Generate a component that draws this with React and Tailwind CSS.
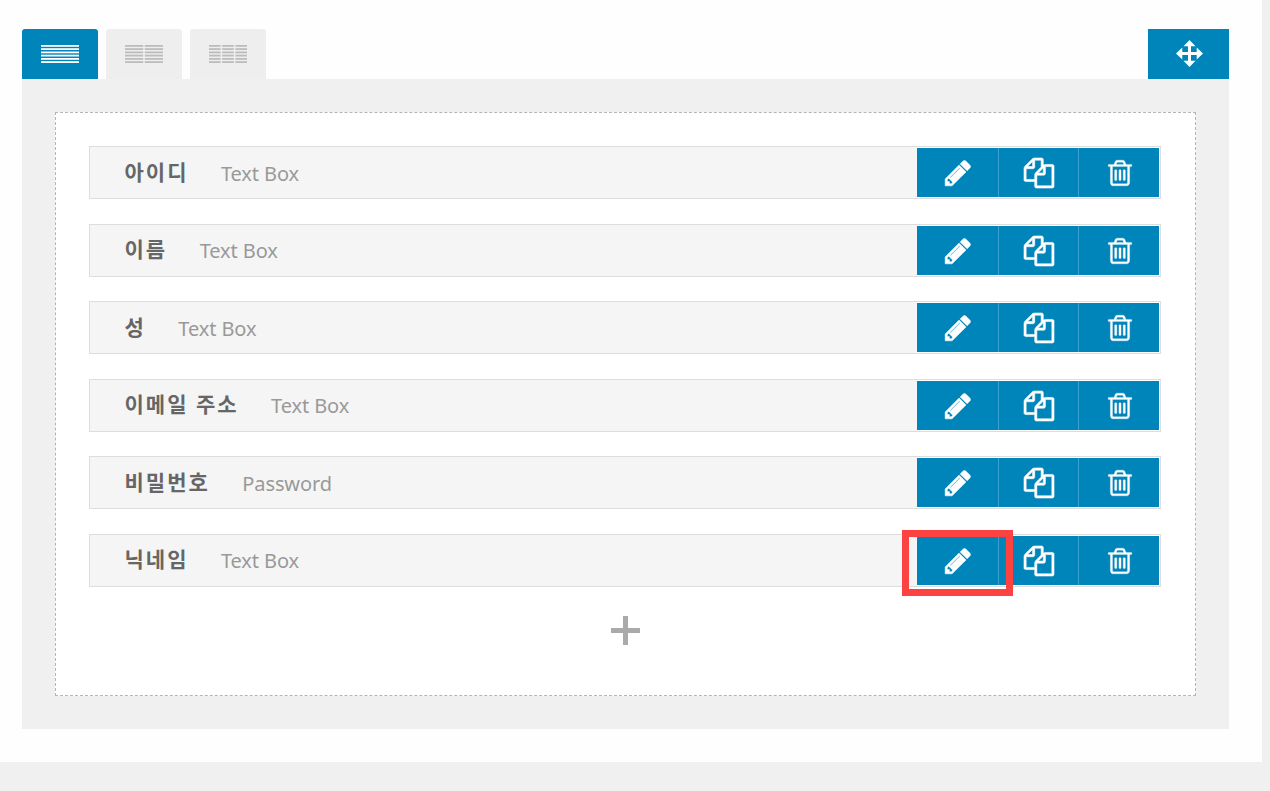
import React, { useState } from 'react';

const fields = [
    { id: 1, label: '아이디', type: 'Text Box' },
    { id: 2, label: '이름', type: 'Text Box' },
    { id: 3, label: '성', type: 'Text Box' },
    { id: 4, label: '이메일 주소', type: 'Text Box' },
    { id: 5, label: '비밀번호', type: 'Password' },
    { id: 6, label: '닉네임', type: 'Text Box', highlighted: true },
];

const Icon = ({ d, weight = 0, className }) => (
    <svg viewBox="0 0 1792 1792" fill="currentColor" stroke="currentColor" strokeWidth={weight} className={`overflow-visible ${className}`}>
        <path d={d} />
    </svg>
);

const PENCIL = 'M491 1536l91-91-235-235-91 91v107h128v128h107zm523-928q0-22-22-22-10 0-17 7l-542 542q-7 7-7 17 0 22 22 22 10 0 17-7l542-542q7-7 7-17zm-54-192l416 416-832 832h-416v-416l832-832zm683 96q0 53-37 90l-166 166-416-416 166-165q36-38 90-38 53 0 91 38l235 234q37 39 37 91z';
const COPY = 'M1696 384q40 0 68 28t28 68v1216q0 40-28 68t-68 28h-960q-40 0-68-28t-28-68v-288h-544q-40 0-68-28t-28-68v-672q0-40 20-88t48-76l408-408q28-28 76-48t88-20h416q40 0 68 28t28 68v328q68-40 128-40h416zm-544 213l-299 299h299v-299zm-640-384l-299 299h299v-299zm196 647l316-316v-416h-384v416q0 40-28 68t-68 28h-416v640h512v-256q0-40 20-88t48-76zm956 804v-1152h-384v416q0 40-28 68t-68 28h-416v640h896z';
const TRASH = 'M704 736v576q0 14-9 23t-23 9h-64q-14 0-23-9t-9-23v-576q0-14 9-23t23-9h64q14 0 23 9t9 23zm256 0v576q0 14-9 23t-23 9h-64q-14 0-23-9t-9-23v-576q0-14 9-23t23-9h64q14 0 23 9t9 23zm256 0v576q0 14-9 23t-23 9h-64q-14 0-23-9t-9-23v-576q0-14 9-23t23-9h64q14 0 23 9t9 23zm128 724v-948h-896v948q0 22 7 40.5t14.5 27 10.5 8.5h832q3 0 10.5-8.5t14.5-27 7-40.5zm-672-1076h448l-48-117q-7-9-17-11h-317q-10 2-17 11zm928 32v64q0 14-9 23t-23 9h-96v948q0 83-47 143.5t-113 60.5h-832q-66 0-113-58.5t-47-141.5v-952h-96q-14 0-23-9t-9-23v-64q0-14 9-23t23-9h309l70-167q15-37 54-63t79-26h320q40 0 79 26t54 63l70 167h309q14 0 23 9t9 23z';

const MoveIcon = () => (
    <svg width="27" height="27" viewBox="0 0 27 27" fill="currentColor">
        <path d="M13.5 0l6 6.3h-4.5v5.7h5.7V7.5l6.3 6-6.3 6V15H15v5.7h4.5l-6 6.3-6-6.3H12V15H6.3v4.5l-6.3-6 6.3-6V12H12V6.3H7.5z" />
    </svg>
);

// rows of lines, split into one, two or three columns
const ColumnsIcon = ({ columns, active }) => {
    const gap = columns > 1 ? 1.6 : 0;
    const width = (38 - gap * (columns - 1)) / columns;
    const lines = [0, 3.2, 6.5, 9.7, 13, 16.2];
    const fill = active ? '#ffffff' : '#bcbcbc';
    return (
        <svg width="38" height="18" viewBox="0 0 38 18">
            {[...Array(columns)].map((_, c) => (
                <g key={c} fill={fill}>
                    {lines.map(y => (
                        <rect key={y} x={c * (width + gap)} y={y} width={width} height="1.8" />
                    ))}
                </g>
            ))}
        </svg>
    );
};

const FieldRow = ({ field }) => (
    <div className="flex h-[53px] shrink-0 border border-[#dddddd] bg-[#f5f5f5]">
        <div className="flex flex-1 items-center pl-[34.5px]">
            <span className="pb-[2px] text-[21px] leading-[30px] font-bold tracking-[2px] text-[#666666]">{field.label}</span>
            <span className="ml-[32.5px] pt-[2px] text-[20px] leading-[30px] tracking-[-0.1px] text-[#999999]">{field.type}</span>
        </div>
        <div className="relative flex py-px pr-px bg-white text-white">
            <button className="flex w-[81px] items-center justify-center bg-[#0085ba] pt-px pl-px">
                <Icon d={PENCIL} weight={30} className="h-[30px] w-[30px]" />
            </button>
            <button className="flex w-20 items-center justify-center border-l border-[#3b9fd0] bg-[#0085ba] pt-px pl-px">
                <Icon d={COPY} weight={36} className="h-[30px] w-[30px]" />
            </button>
            <button className="flex w-[81px] items-center justify-center border-l border-[#3b9fd0] bg-[#0085ba] pt-px pl-[2px]">
                <Icon d={TRASH} weight={16} className="h-[30px] w-[30px]" />
            </button>
            {field.highlighted && (
                <div className="absolute -top-[5px] -left-[15px] h-[66px] w-[111px] border-[7px] border-[#fd4242]" />
            )}
        </div>
    </div>
);

const App = () => {
    const [layout, setLayout] = useState(1);

    return (
        <div className="h-[791px] overflow-hidden bg-[#f0f0f0] font-['Noto_Sans','Noto_Sans_CJK_KR',sans-serif]">
            <div className="h-[762px] w-[1262px] bg-[#fefefe] pt-[29px] pr-[33px] pl-[22px]">
                <div className="flex h-[50px] items-stretch">
                    <div className="flex gap-2">
                        {[1, 2, 3].map(n => (
                            <button
                                key={n}
                                onClick={() => setLayout(n)}
                                className={`flex w-[76px] items-center justify-center rounded-t-[3px] ${layout === n ? 'bg-[#0085ba]' : 'bg-[#eeeeee]'}`}
                            >
                                <ColumnsIcon columns={n} active={layout === n} />
                            </button>
                        ))}
                    </div>
                    <button className="ml-auto flex w-[81px] items-center justify-center bg-[#0085ba] pb-px pl-px text-white">
                        <MoveIcon />
                    </button>
                </div>
                <div className="h-[650px] bg-[#f0f0f0] p-[33px]">
                    <div className="flex h-[584px] flex-col border border-dashed border-[#b4b4b4] bg-white pt-[33px] pr-[34px] pl-[33px]">
                        <div className="flex flex-col gap-[24.55px]">
                            {fields.map(field => (
                                <FieldRow key={field.id} field={field} />
                            ))}
                        </div>
                        <button className="mt-[29px] flex justify-center pl-px text-[#aaaaaa]">
                            <svg width="29" height="29" viewBox="0 0 29 29" fill="currentColor">
                                <path d="M12 0h5v12h12v5H17v12h-5V17H0v-5h12z" />
                            </svg>
                        </button>
                    </div>
                </div>
            </div>
        </div>
    );
};

export default App;
